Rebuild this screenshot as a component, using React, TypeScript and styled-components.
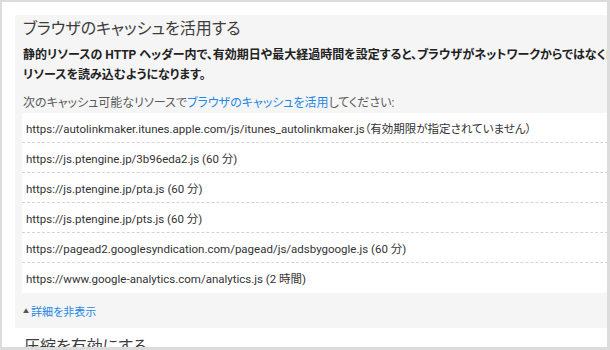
import React from 'react'
import styled, { createGlobalStyle } from 'styled-components'

const JP = `Roboto, "Noto Sans CJK JP", sans-serif`
const LINK = '#1e88e5'

const GlobalStyle = createGlobalStyle`
  html, body {
    margin: 0;
    padding: 0;
    background: #fff;
  }
  body {
    font-family: ${JP};
    font-feature-settings: 'palt';
  }
`

const Frame = styled.div`
  width: 610px;
  height: 350px;
  box-sizing: border-box;
  border-style: solid;
  border-color: #dcdcdc;
  border-width: 2px 3px 3px 2px;
  overflow: hidden;
  padding-left: 13px;
  background: #fff;
`

const CutLink = styled.div`
  margin-top: -13px;
  padding-left: 17px;
  height: 16px;
  line-height: 16px;
  font-size: 12px;
  color: ${LINK};
  white-space: nowrap;
`

const Panel = styled.section`
  width: 640px;
  margin-top: 10px;
  background: #f5f5f5;
  padding: 2px 0 7px 8px;
`

const Title = styled.h2`
  margin: 0;
  font-size: 16px;
  font-weight: 400;
  line-height: 24px;
  color: #3c3c3c;
  white-space: nowrap;
`

const Lead = styled.p`
  margin: 4px 0 0;
  font-size: 12px;
  font-weight: 700;
  line-height: 20px;
  color: #212121;
  white-space: nowrap;
`

const Hint = styled.p`
  margin: 8px 0 0;
  font-size: 12px;
  line-height: 20px;
  color: #5a5a5a;
  white-space: nowrap;
`

const A = styled.a`
  color: ${LINK};
  text-decoration: none;
`

const List = styled.ul`
  list-style: none;
  margin: 0 0 0 -1px;
  padding: 0;
  background: #fff;
`

const Row = styled.li`
  height: 30px;
  box-sizing: border-box;
  display: flex;
  align-items: center;
  padding-left: 4px;
  font-size: 11.5px;
  color: #333;
  white-space: nowrap;
  border-bottom: 1px dashed #d4d4d4;
  &:last-child {
    border-bottom: none;
  }
`

const Toggle = styled.a`
  display: flex;
  align-items: center;
  gap: 2px;
  margin-top: 8px;
  height: 20px;
  font-size: 11px;
  color: ${LINK};
  text-decoration: none;
`

const Caret = styled.span`
  font-size: 6px;
  color: #555;
  line-height: 1;
`

const NextTitle = styled(Title)`
  margin-top: 7px;
  padding-left: 9px;
`

const resources = [
  'https://autolinkmaker.itunes.apple.com/js/itunes_autolinkmaker.js（有効期限が指定されていません）',
  'https://js.ptengine.jp/3b96eda2.js (60 分)',
  'https://js.ptengine.jp/pta.js (60 分)',
  'https://js.ptengine.jp/pts.js (60 分)',
  'https://pagead2.googlesyndication.com/pagead/js/adsbygoogle.js (60 分)',
  'https://www.google-analytics.com/analytics.js (2 時間)',
]

export default function App() {
  return (
    <>
      <GlobalStyle />
      <Frame>
        <CutLink>ページの読み込み時間を短縮</CutLink>
        <Panel>
          <Title>ブラウザのキャッシュを活用する</Title>
          <Lead>
            静的リソースの HTTP ヘッダー内で、有効期日や最大経過時間を設定すると、ブラウザがネットワークからではなくローカル ディスクから以前にダウンロードした
            <br />
            リソースを読み込むようになります。
          </Lead>
          <Hint>
            次のキャッシュ可能なリソースで<A href="#">ブラウザのキャッシュを活用</A>してください:
          </Hint>
          <List>
            {resources.map((r) => (
              <Row key={r}>{r}</Row>
            ))}
          </List>
          <Toggle href="#">
            <Caret>▲</Caret>詳細を非表示
          </Toggle>
        </Panel>
        <NextTitle>圧縮を有効にする</NextTitle>
      </Frame>
    </>
  )
}
